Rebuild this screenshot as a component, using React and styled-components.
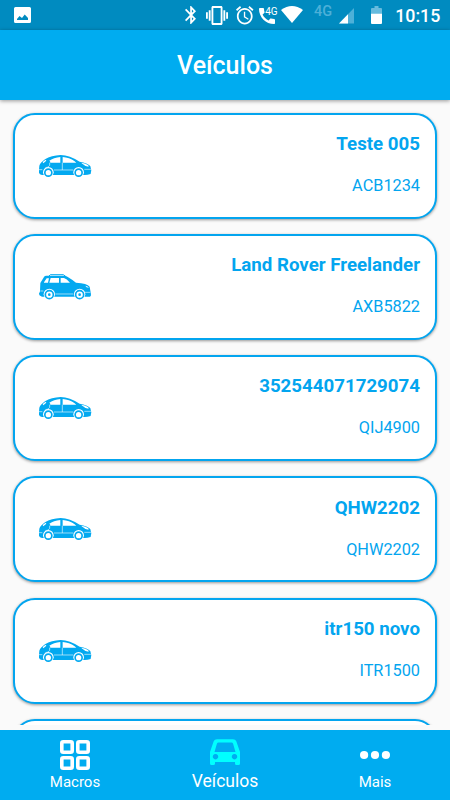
import styled, { createGlobalStyle } from "styled-components"

const vehicles = [
    { name: "Teste 005", plate: "ACB1234", type: "sedan" },
    { name: "Land Rover Freelander", plate: "AXB5822", type: "suv" },
    { name: "352544071729074", plate: "QIJ4900", type: "sedan" },
    { name: "QHW2202", plate: "QHW2202", type: "sedan" },
    { name: "itr150 novo", plate: "ITR1500", type: "sedan" },
    { name: "", plate: "", type: "" },
];

const StatusIcon = ({ width, height, gap, top, box, children }) => (
    <IconSlot $gap={gap} $top={top}>
        <svg width={width} height={height} viewBox={box} preserveAspectRatio="none" fill="#fff">
            {children}
        </svg>
    </IconSlot>
)

const SystemBar = () => (
    <StatusBar>
        <StatusIcon width="17" height="16" gap={14} top={7} box="0 0 17 16">
            <path fillRule="evenodd" d="M1.5 0h14Q17 0 17 1.5v13q0 1.5-1.5 1.5h-14Q0 16 0 14.5v-13Q0 0 1.5 0zM3 13h11v-2l-3.3-3.5L8 11 5.5 9 3 12z" />
        </StatusIcon>
        <StatusIcon width="11" height="18" gap={154} top={6} box="5 2 12.71 20">
            <path d="M17.71 7.71L12 2h-1v7.59L6.41 5 5 6.41 10.59 12 5 17.59 6.41 19 11 14.41V22h1l5.71-5.71-4.3-4.29 4.3-4.29zM13 5.83l1.88 1.88L13 9.59V5.83zm1.88 10.46L13 18.17v-3.76l1.88 1.88z" />
        </StatusIcon>
        <StatusIcon width="22" height="19" gap={9.5} top={5.5} box="0 3 24 18">
            <path d="M0 15h2V9H0v6zm3 2h2V7H3v10zm19-8v6h2V9h-2zm-3 8h2V7h-2v10zM16.5 3h-9C6.67 3 6 3.67 6 4.5v15c0 .83.67 1.5 1.5 1.5h9c.83 0 1.5-.67 1.5-1.5v-15c0-.83-.67-1.5-1.5-1.5zM16 19H8V5h8v14z" />
        </StatusIcon>
        <StatusIcon width="17.5" height="18.5" gap={8} top={5.7} box="2 1.86 20 20.14">
            <path d="M22 5.72l-4.6-3.86-1.29 1.53 4.6 3.86L22 5.72zM7.88 3.39L6.6 1.86 2 5.71l1.29 1.53 4.59-3.85zM12.5 8H11v6l4.75 2.85.75-1.23-4-2.37V8zM12 4c-4.97 0-9 4.03-9 9s4.02 9 9 9c4.97 0 9-4.03 9-9s-4.03-9-9-9zm0 16c-3.87 0-7-3.13-7-7s3.13-7 7-7 7 3.13 7 7-3.13 7-7 7z" />
        </StatusIcon>
        <StatusIcon width="16" height="16" gap={6} top={8.3} box="3 3 18 18">
            <path d="M20.01 15.38c-1.23 0-2.42-.2-3.53-.56-.35-.12-.74-.03-1.01.24l-1.57 1.97c-2.83-1.35-5.48-3.9-6.89-6.83l1.95-1.66c.27-.28.35-.67.24-1.02-.37-1.11-.56-2.3-.56-3.53 0-.54-.45-.99-.99-.99H4.19C3.65 3 3 3.24 3 3.99 3 13.28 10.73 21 20.01 21c.71 0 .99-.63.99-1.18v-3.45c0-.54-.45-.99-.99-.99z" />
        </StatusIcon>
        <CallNetwork>4G</CallNetwork>
        <StatusIcon width="22" height="17" gap={3.3} top={6} box="0 0 22 17">
            <path d="M0 4Q11-4 22 4L11 17z" />
        </StatusIcon>
        <Network>4G</Network>
        <StatusIcon width="15" height="15.5" gap={6.7} top={8.3} box="0 0 15 15.5">
            <path d="M15 0v15.5H0z" fill="#4db0d8" />
            <path d="M9 6.2v9.3H0z" />
        </StatusIcon>
        <StatusIcon width="11" height="18" gap={17} top={6} box="0 0 11 18">
            <path d="M3.5 0h4v2H10q1 0 1 1v5H0V3q0-1 1-1h2.5z" fill="#66bbde" />
            <path d="M0 7.7h11V17q0 1-1 1H1q-1 0-1-1z" />
        </StatusIcon>
        <Clock>10:15</Clock>
    </StatusBar>
)

const Sedan = () => (
    <svg width="52.3" height="22" viewBox="27 28 157 66">
        <path fill="#03a9f0" d="M27 72l1-12q3-9 17-19Q64 29 92 28q27 1 57 20 24 4 32 13l3 13-2 11q-9 3-18 3H36q-8-2-9-7z" />
        <path fill="#fff" d="M56 47Q72 35 91 34v17H61l-1-5zM98 34q20 1 36 13l5 4H98zM38 49l9-7 2 3-9 8zM155 51q13 2 20 8l1 4q-12-1-21-10z" />
        <path stroke="#fff" strokeWidth="1.8" fill="none" d="M59 51v8q-3 7-13 7M97 51v22M27 72h10M72 73h58M163 71h20" />
        <circle cx="55" cy="80" r="16" fill="#fff" />
        <circle cx="146" cy="80" r="16" fill="#fff" />
        <circle cx="55" cy="81" r="10.5" stroke="#03a9f0" strokeWidth="5" fill="#fff" />
        <circle cx="146" cy="81" r="10.5" stroke="#03a9f0" strokeWidth="5" fill="#fff" />
    </svg>
)

const Suv = () => (
    <svg width="52.3" height="26" viewBox="27 26 157 78">
        <path fill="none" stroke="#03a9f0" strokeWidth="3" d="M57 32l4-4h39l7 5" />
        <path fill="#03a9f0" d="M31 53l11-18q2-4 7-4h55q9 1 34 21 34 2 41 12l4 22q1 6-3 8H36q-9-2-9-10 2-2 3-6z" />
        <path fill="#fff" d="M42 51l8-12h7l-3 13H42zM62 38h25v14H58zM92 38h10q8 2 18 14H92zM166 61q8 1 11 6l-7-1z" />
        <path stroke="#fff" strokeWidth="1.8" fill="none" d="M31 77h9M76 86h54M165 81h16" />
        <circle cx="58" cy="87" r="17" fill="#fff" />
        <circle cx="149" cy="87" r="17" fill="#fff" />
        <circle cx="58" cy="88" r="12" stroke="#03a9f0" strokeWidth="5" fill="#fff" />
        <circle cx="149" cy="88" r="12" stroke="#03a9f0" strokeWidth="5" fill="#fff" />
        <circle cx="58" cy="88" r="4" fill="#03a9f0" />
        <circle cx="149" cy="88" r="4" fill="#03a9f0" />
    </svg>
)

const VehicleCard = ({ vehicle }) => (
    <Card>
        <CarSlot>
            {vehicle.type === "sedan" && <Sedan />}
            {vehicle.type === "suv" && <Suv />}
        </CarSlot>
        <CardText>
            <VehicleName>{vehicle.name}</VehicleName>
            <Plate>{vehicle.plate}</Plate>
        </CardText>
    </Card>
)

export default function App() {
    return (
        <Screen>
            <GlobalStyle />
            <SystemBar />
            <Header>Veículos</Header>
            <List>
                {vehicles.map((vehicle, index) => <VehicleCard key={index} vehicle={vehicle} />)}
            </List>
            <TabBar>
                <Tab>
                    <TabIcon>
                        <svg width="30" height="30" fill="none" stroke="#fff" strokeWidth="3.6">
                            <rect x="1.8" y="1.8" width="10.4" height="10.4" rx="1.5" />
                            <rect x="17.8" y="1.8" width="10.4" height="10.4" rx="1.5" />
                            <rect x="1.8" y="17.8" width="10.4" height="10.4" rx="1.5" />
                            <rect x="17.8" y="17.8" width="10.4" height="10.4" rx="1.5" />
                        </svg>
                    </TabIcon>
                    <TabLabel>Macros</TabLabel>
                </Tab>
                <Tab>
                    <TabIcon>
                        <svg width="30" height="30" fill="#0ff">
                            <path fillRule="evenodd" d="M7-.8h16q2.5 0 3.3 2L30 12v11.5q0 1.5-1.5 1.5h-2Q25 25 25 23.5V22H5v1.5Q5 25 3.5 25h-2Q0 25 0 23.5V12L3.7 1.2q.8-2 3.3-2zM8.5 2.5q-1.2 0-1.6 1.2L4.5 12h21l-2.4-8.3q-.4-1.2-1.6-1.2zM5.5 14a2.7 2.7 0 1 0 .01 0zM24.5 14a2.7 2.7 0 1 0 .01 0z" />
                        </svg>
                    </TabIcon>
                    <TabLabel $active>Veículos</TabLabel>
                </Tab>
                <Tab>
                    <TabIcon>
                        <svg width="30" height="30" fill="#fff">
                            <circle cx="4.1" cy="15" r="4.1" />
                            <circle cx="15" cy="15" r="4.1" />
                            <circle cx="25.9" cy="15" r="4.1" />
                        </svg>
                    </TabIcon>
                    <TabLabel>Mais</TabLabel>
                </Tab>
            </TabBar>
        </Screen>
    );
}

const GlobalStyle = createGlobalStyle`
    body {
        margin: 0;
        font-family: Roboto, sans-serif;
    }

    svg {
        display: block;
        overflow: visible;
    }
`

const Screen = styled.main`
    display: flex;
    flex-direction: column;
    width: 450px;
    height: 800px;
    overflow: hidden;
    background-color: #fafafa;
`

const StatusBar = styled.div`
    display: flex;
    align-items: flex-start;
    flex: 0 0 30px;
    background-color: #008bc0;
    color: white;
`

const IconSlot = styled.span`
    flex: none;
    margin-left: ${({ $gap }) => $gap}px;
    padding-top: ${({ $top }) => $top}px;
`

const CallNetwork = styled.span`
    flex: none;
    width: 12px;
    margin: 6px 0 0 -9.8px;
    font-size: 10px;
    line-height: 11px;
`

const Network = styled.span`
    flex: none;
    width: 18px;
    margin: 4px 0 0 11.5px;
    font-size: 14.5px;
    font-weight: 500;
    line-height: 16px;
    color: #4db0d8;
`

const Clock = styled.span`
    margin: 5px 0 0 13.5px;
    font-size: 17.8px;
    font-weight: 500;
    line-height: 21px;
`

const Header = styled.header`
    z-index: 1;
    flex: 0 0 70px;
    display: flex;
    align-items: center;
    justify-content: center;
    box-sizing: border-box;
    padding-top: 2px;
    background-color: #00acf0;
    box-shadow: 0 1px 4px rgb(0 0 0 / 0.4);
    color: white;
    font-size: 25px;
    font-weight: 500;
    line-height: 30px;
`

const List = styled.section`
    display: flex;
    flex-direction: column;
    gap: 15.25px;
    flex: 0 0 625px;
    box-sizing: border-box;
    padding: 12.7px 13px 0;
    margin-bottom: 5px;
    overflow: hidden;
`

const Card = styled.article`
    display: flex;
    align-items: center;
    justify-content: space-between;
    flex: 0 0 106px;
    box-sizing: border-box;
    padding: 0 15px 0 24px;
    border: 2px solid #03a5ef;
    border-radius: 22px;
    background-color: white;
    box-shadow: 0 1px 3px rgb(0 0 0 / 0.4);
    color: #03a5ef;
`

const CarSlot = styled.div`
    display: flex;
    align-items: center;
    width: 53px;
`

const CardText = styled.div`
    display: flex;
    flex-direction: column;
    align-items: flex-end;
    gap: 20px;
    padding-bottom: 1.6px;
`

const VehicleName = styled.h2`
    margin: 0;
    font-size: 18.7px;
    font-weight: 700;
    line-height: 22px;
`

const Plate = styled.p`
    margin: 0;
    font-size: 16.3px;
    line-height: 22px;
`

const TabBar = styled.nav`
    display: flex;
    flex: 0 0 70px;
    background-color: #00acf0;
`

const Tab = styled.div`
    display: flex;
    flex: 1;
    flex-direction: column;
    align-items: center;
    padding-top: 10px;
`

const TabIcon = styled.span`
    height: 30px;
`

const TabLabel = styled.span`
    margin-top: ${({ $active }) => $active ? "1px" : "2px"};
    color: white;
    font-size: ${({ $active }) => $active ? "17.5px" : "15px"};
    line-height: 20px;
`
